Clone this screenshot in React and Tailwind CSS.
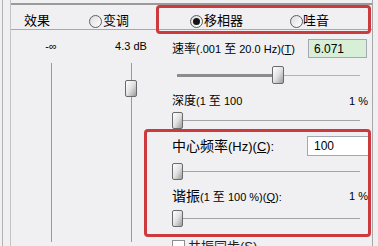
function Radio({ checked }) {
  return (
    <span className="w-[13px] h-[13px] rounded-full border border-[#5e5e5e] bg-linear-to-br from-[#dcdcdc] to-white flex items-center justify-center shrink-0">
      {checked && <span className="w-[7px] h-[7px] rounded-full bg-[#141414]" />}
    </span>
  );
}

function HThumb({ w = 11, h = 17 }) {
  return (
    <div
      className={`${w === 12 ? "w-[12px]" : "w-[11px]"} ${h === 18 ? "h-[18px]" : "h-[17px]"} shrink-0 rounded-[2px] border border-[#6a6a6a] bg-linear-to-br from-white via-[#e2e2e2] to-[#9c9c9c]`}
    />
  );
}

function Slider() {
  return (
    <div className="mt-[7px] h-[17px] flex items-center">
      <HThumb />
      <div className="w-[177px] h-px bg-[#a4a4a4]" />
    </div>
  );
}

export default function App() {
  return (
    <div className="relative w-[378px] h-[246px] overflow-hidden bg-[#f0f0f2] text-black font-['Liberation_Sans','Noto_Sans_CJK_SC',sans-serif] flex">
      <div className="w-[2px] shrink-0" />
      <div className="w-px bg-[#b4b4b4] shrink-0" />
      <div className="w-[7px] shrink-0" />
      <div className="w-px bg-[#c4c4c4] shrink-0" />
      <div className="w-[362px] shrink-0 flex flex-col border-r border-[#a8a8a8]">
        <div className="h-[3px] shrink-0" />
        <div className="h-[2px] bg-[#9a9a9a] shrink-0" />
        <div className="h-[25px] shrink-0 pt-[8px] border-b border-[#a8a8a8] flex items-center text-[13px] leading-[16px]">
          <span className="ml-[13px]">效果</span>
          <span className="ml-[39px]"><Radio /></span>
          <span className="ml-px">变调</span>
          <span className="ml-[61px]"><Radio checked /></span>
          <span className="ml-px">移相器</span>
          <span className="ml-[47px]"><Radio /></span>
          <span className="ml-0">哇音</span>
        </div>
        <div className="flex-1 flex">
          <div className="w-[140px] shrink-0 flex pl-[20px]">
            <div className="w-[40px] flex flex-col items-center">
              <div className="mt-[8px] text-[11px] leading-[16px]">-∞</div>
              <div className="mt-[9px] w-px h-[179px] bg-[#9a9a9a]" />
            </div>
            <div className="ml-[40px] w-[40px] flex flex-col items-center">
              <div className="mt-[8px] text-[11px] leading-[16px] whitespace-nowrap">4.3 dB</div>
              <div className="mt-[9px] w-px h-[17px] bg-[#9a9a9a]" />
              <HThumb w={12} />
              <div className="w-px h-[145px] bg-[#9a9a9a]" />
            </div>
          </div>
          <div className="flex-1 pl-[21px] pr-[4px] flex flex-col text-[11px] leading-[14px]">
            <div className="mt-[9px] h-[19px] flex items-center">
              <span className="whitespace-nowrap">
                <span className="text-[12px]">速率</span>(.001 <span className="text-[12px]">至</span> 20.0 Hz)(<span className="underline">T</span>)
              </span>
              <div className="ml-auto mr-px w-[59px] h-[19px] border border-[#a3a9b1] bg-[#d7eed7] flex items-center pl-[5px] text-[12px]">6.071</div>
            </div>
            <div className="mt-[8px] h-[18px] flex items-center">
              <div className="ml-[5px] w-[95px] h-[3px] bg-[#8c8c8c]" />
              <HThumb w={12} h={18} />
              <div className="w-[76px] h-px bg-[#b4b4b4]" />
            </div>
            <div className="mt-[10px] h-[14px] flex items-center">
              <span className="whitespace-nowrap">
                <span className="text-[12px]">深度</span>(1 <span className="text-[12px]">至</span> 100
              </span>
              <span className="ml-auto">1 %</span>
            </div>
            <div className="mt-[4px] h-[17px] flex items-center">
              <HThumb />
              <div className="w-[177px] h-px bg-[#a4a4a4]" />
            </div>
            <div className="mt-[7px] h-[20px] flex items-center">
              <span className="whitespace-nowrap text-[13px] leading-[18px]">
                <span className="text-[14px]">中心频率</span>(Hz)(<span className="underline">C</span>):
              </span>
              <div className="ml-auto mr-[-3px] w-[64px] h-[20px] border border-[#a3a9b1] bg-white flex items-center pl-[6px] text-[12px]">100</div>
            </div>
            <Slider />
            <div className="mt-[9px] h-[14px] flex items-center">
              <span className="whitespace-nowrap">
                <span className="text-[14px]">谐振</span>(1 <span className="text-[12px]">至</span> 100 %)(<span className="underline">Q</span>):
              </span>
              <span className="ml-auto">1 %</span>
            </div>
            <Slider />
            <div className="mt-[13px] flex items-start">
              <div className="w-[13px] h-[13px] border border-[#8e8f8f] bg-white shrink-0" />
              <span className="ml-[3px] text-[13px] leading-[14px] text-[#222]">共振同步(S)</span>
            </div>
          </div>
        </div>
      </div>
      <div className="absolute left-[156px] top-[5px] w-[215px] h-[29px] border-[3px] border-[#cc3a3d] rounded-[4px]" />
      <div className="absolute left-[144px] top-[129px] w-[227px] h-[108px] border-[3px] border-[#cc3a3d] rounded-[4px]" />
    </div>
  );
}
